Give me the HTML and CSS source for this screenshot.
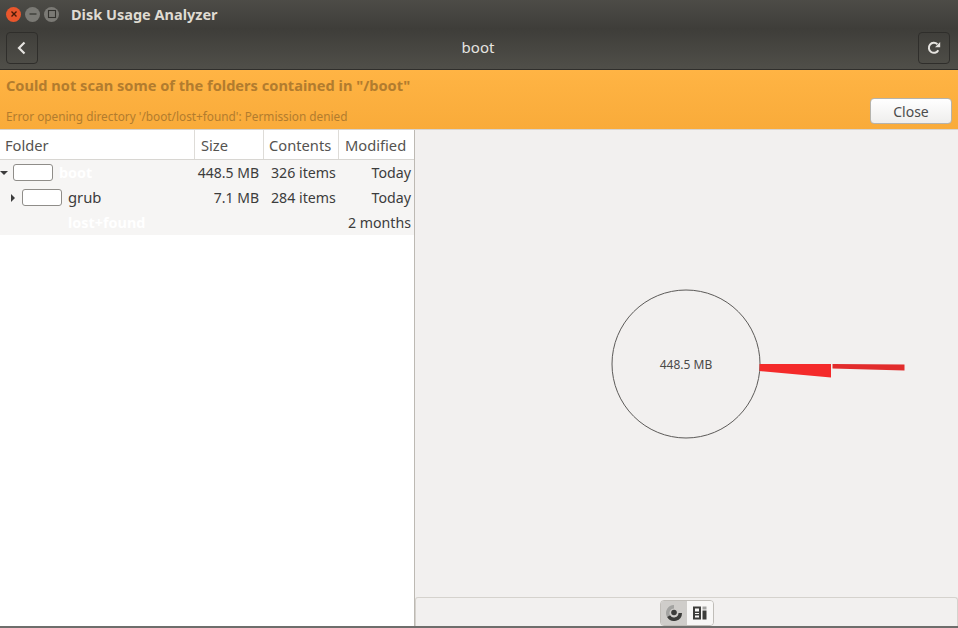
FILE: index.html
```html
<!DOCTYPE html>
<html>
  <head>
    <title>Disk Usage Analyzer</title>
    <link rel="stylesheet" href="styles.css">
  </head>
  <body>
    <div class="window">
      <div class="titlebar">
        <div class="winbtns">
          <span class="winbtn close">
            <svg width="10" height="10" viewBox="0 0 10 10"><path d="M2.5 2.5l5 5M7.5 2.5l-5 5" stroke="#4a1a08" stroke-width="1.4"/></svg>
          </span>
          <span class="winbtn">
            <svg width="10" height="10" viewBox="0 0 10 10"><path d="M1.5 5h7" stroke="#33322e" stroke-width="1.2"/></svg>
          </span>
          <span class="winbtn">
            <svg width="10" height="10" viewBox="0 0 10 10"><rect x="1.5" y="1.5" width="7" height="7" fill="none" stroke="#33322e" stroke-width="1.1"/></svg>
          </span>
        </div>
        <span class="wintitle">Disk Usage Analyzer</span>
      </div>

      <div class="headerbar">
        <button class="hbtn">
          <svg width="16" height="16" viewBox="0 0 16 16"><path d="M10.5 2.500L5 8l5.500 5.500" fill="none" stroke="#e6e4e0" stroke-width="2.200"/></svg>
        </button>
        <span class="headertitle">boot</span>
        <button class="hbtn">
          <svg width="16" height="16" viewBox="0 0 16 16"><path d="M12.300 10.200A5 5 0 1 1 11.400 4.300" fill="none" stroke="#e6e4e0" stroke-width="2"/><path d="M9 7.200h5.200V2z" fill="#e6e4e0"/></svg>
        </button>
      </div>

      <div class="infobar">
        <div class="infotext">
          <div class="infohead">Could not scan some of the folders contained in "/boot"</div>
          <div class="infomsg">Error opening directory '/boot/lost+found': Permission denied</div>
        </div>
        <button class="closebtn">Close</button>
      </div>

      <div class="main">
        <div class="treepane">
          <div class="row headrow">
            <div class="c-folder hcell">Folder</div>
            <div class="c-size hcell">Size</div>
            <div class="c-items hcell">Contents</div>
            <div class="c-mod hcell">Modified</div>
          </div>
          <div class="row datarow">
            <div class="c-folder">
              <span class="arrow down"></span>
              <span class="foldertag"></span>
              <span class="name white">boot</span>
            </div>
            <div class="c-size num">448.5 MB</div>
            <div class="c-items">326 items</div>
            <div class="c-mod num">Today</div>
          </div>
          <div class="row datarow">
            <div class="c-folder indent">
              <span class="arrow right"></span>
              <span class="foldertag"></span>
              <span class="name">grub</span>
            </div>
            <div class="c-size num">7.1 MB</div>
            <div class="c-items">284 items</div>
            <div class="c-mod num">Today</div>
          </div>
          <div class="row datarow">
            <div class="c-folder lastname">
              <span class="name white">lost+found</span>
            </div>
            <div class="c-size num"></div>
            <div class="c-items"></div>
            <div class="c-mod num">2 months</div>
          </div>
        </div>

        <div class="chartpane">
          <div class="chart">
            <svg width="543" height="467" viewBox="0 0 543 467">
              <circle cx="271" cy="234" r="74" fill="#f2f0ef" stroke="#5c5a58" stroke-width="1"/>
              <path d="M344.500 234L416 234V247.600L344.500 241z" fill="#f42a2a"/>
              <path d="M417.500 234L489.500 234.500V240.600L417.500 238.500z" fill="#e22c2c"/>
              <text class="chartlabel" x="271" y="239" text-anchor="middle">448.5 MB</text>
            </svg>
          </div>
          <div class="bottombar">
            <div class="toggle">
              <span class="tgl on">
                <svg width="18" height="18" viewBox="0 0 18 18">
                  <path d="M9 1A8 8 0 0 0 2.070 13L5.100 11.250A4.500 4.500 0 0 1 9 4.500z" fill="#a3a3a1"/>
                  <path d="M2.070 13A8 8 0 0 0 17 9L13.500 9A4.500 4.500 0 0 1 5.100 11.250z" fill="#3c3c3a"/>
                  <circle cx="9" cy="8.500" r="2.800" fill="#3c3c3a"/>
                </svg>
              </span>
              <span class="tgl">
                <svg width="16" height="16" viewBox="0 0 16 16">
                  <path d="M1 1.500h8v13H1zM3 3.500v3h4v-3zM3 8v1h4V8zM3 10.500v2h4v-2z" fill="#3c3c3a" fill-rule="evenodd"/>
                  <rect x="10.500" y="1.500" width="4" height="3" fill="#a3a3a1"/>
                  <rect x="10.500" y="5.500" width="4" height="9" fill="#3c3c3a"/>
                </svg>
              </span>
            </div>
          </div>
        </div>
      </div>
    </div>
  </body>
</html>
```

FILE: styles.css
```css
html, body {
  margin: 0;
  padding: 0;
}

body {
  width: 958px;
  height: 628px;
  overflow: hidden;
  font-family: "Noto Sans", sans-serif;
  font-size: 14.2px;
  color: #3c3c3c;
  background-color: #f2f0ef;
}

.window {
  display: flex;
  flex-direction: column;
  height: 628px;
}

.titlebar {
  display: flex;
  align-items: center;
  height: 28px;
  padding-left: 6px;
  background: linear-gradient(#4d4c47, #3f3e3a);
}

.winbtns {
  display: flex;
  gap: 4px;
}

.winbtn {
  display: flex;
  align-items: center;
  justify-content: center;
  width: 15px;
  height: 15px;
  border-radius: 50%;
  background-color: #7b7a75;
}

.winbtn.close {
  background-color: #e9562c;
}

.wintitle {
  margin-left: 12px;
  font-size: 14.5px;
  font-weight: 700;
  color: #dfdbd2;
}

.headerbar {
  display: flex;
  align-items: center;
  justify-content: space-between;
  height: 42px;
  padding: 0 8px 1px 6px;
  box-sizing: border-box;
  background: linear-gradient(#3e3d39, #504f49);
  border-bottom: 1px solid #302f2c;
}

.hbtn {
  display: flex;
  align-items: center;
  justify-content: center;
  width: 32px;
  height: 32px;
  padding: 0;
  background: transparent;
  border: 1px solid #2f2e2b;
  border-radius: 4px;
}

.headertitle {
  font-size: 15px;
  line-height: 18px;
  margin-bottom: 2px;
  color: #e6e4e0;
}

.infobar {
  display: flex;
  justify-content: space-between;
  height: 60px;
  padding: 0 6px;
  box-sizing: border-box;
  background: linear-gradient(#ffb444, #f9ab3a);
  border-bottom: 1px solid #d8d4cf;
}

.infohead {
  margin-top: 5px;
  font-size: 14.6px;
  font-weight: 700;
  line-height: 20px;
  color: #b27c2e;
}

.infomsg {
  margin-top: 13px;
  font-size: 11.8px;
  line-height: 16px;
  color: #b27c2e;
}

.closebtn {
  align-self: flex-end;
  width: 82px;
  height: 26px;
  margin: 0 0 5px;
  padding: 0;
  font-family: inherit;
  font-size: 14px;
  color: #4c4c4c;
  background: linear-gradient(#ffffff, #efeeed);
  border: 1px solid #b5b3ad;
  border-radius: 4px;
}

.main {
  display: flex;
  flex: 1;
  min-height: 0;
  border-bottom: 2px solid #6e6e6c;
}

.treepane {
  width: 414px;
  background-color: #ffffff;
  border-right: 1px solid #bdb9b3;
}

.row {
  display: flex;
  height: 25px;
  align-items: center;
  line-height: 25px;
  background-color: #f6f5f4;
}

.headrow {
  height: 29px;
  background-color: #ffffff;
  border-bottom: 1px solid #d8d6d2;
  font-size: 14.7px;
  color: #555350;
}

.hcell {
  height: 29px;
  line-height: 30px;
  padding-left: 5px;
  box-sizing: border-box;
  border-right: 1px solid #dedcd8;
}

.hcell.c-size {
  padding-left: 6px;
}

.hcell.c-mod {
  border-right: 0;
  padding-left: 6px;
}

.c-folder {
  display: flex;
  align-items: center;
  width: 195px;
  box-sizing: border-box;
}

.c-size {
  width: 69px;
  box-sizing: border-box;
}

.c-items {
  width: 75px;
  box-sizing: border-box;
}

.c-mod {
  width: 75px;
  box-sizing: border-box;
}

.datarow .c-size {
  font-size: 14px;
}

.datarow .c-items {
  padding-left: 7px;
}

.num {
  text-align: right;
  padding-right: 5px;
}

.datarow .c-mod {
  padding-right: 3px;
}

.arrow {
  width: 0;
  height: 0;
  margin-right: 5px;
}

.arrow.down {
  margin-left: 0;
  border-left: 4px solid transparent;
  border-right: 4px solid transparent;
  border-top: 4px solid #3c3c3c;
}

.arrow.right {
  margin-left: 11px;
  margin-right: 7px;
  border-top: 4px solid transparent;
  border-bottom: 4px solid transparent;
  border-left: 4px solid #3c3c3c;
}

.foldertag {
  width: 38px;
  height: 15px;
  background-color: #ffffff;
  border: 1px solid #8f8d89;
  border-radius: 3px;
}

.name {
  margin-left: 6px;
  font-size: 14.8px;
}

.name.white {
  color: #ffffff;
  font-weight: 700;
  font-size: 14.4px;
}

.lastname .name {
  margin-left: 68px;
}

.chartpane {
  display: flex;
  flex-direction: column;
  flex: 1;
  min-width: 0;
}

.chart {
  flex: 1;
  min-height: 0;
}

.chart svg {
  display: block;
}

.chartlabel {
  font-family: "Noto Sans", sans-serif;
  font-size: 12px;
  fill: #4a4a48;
}

.bottombar {
  display: flex;
  justify-content: center;
  align-items: center;
  height: 29px;
  box-sizing: border-box;
  background-color: #f2f0ef;
  border: 1px solid #d5d2cd;
  border-bottom: 0;
  border-radius: 3px 3px 0 0;
  padding-top: 1px;
}

.toggle {
  display: flex;
  height: 24px;
  border: 1px solid #c0bdb8;
  border-radius: 4px;
  overflow: hidden;
}

.tgl {
  display: flex;
  align-items: center;
  justify-content: center;
  width: 26px;
  background-color: #f8f7f6;
}

.tgl.on {
  background-color: #cfcdca;
}
```
